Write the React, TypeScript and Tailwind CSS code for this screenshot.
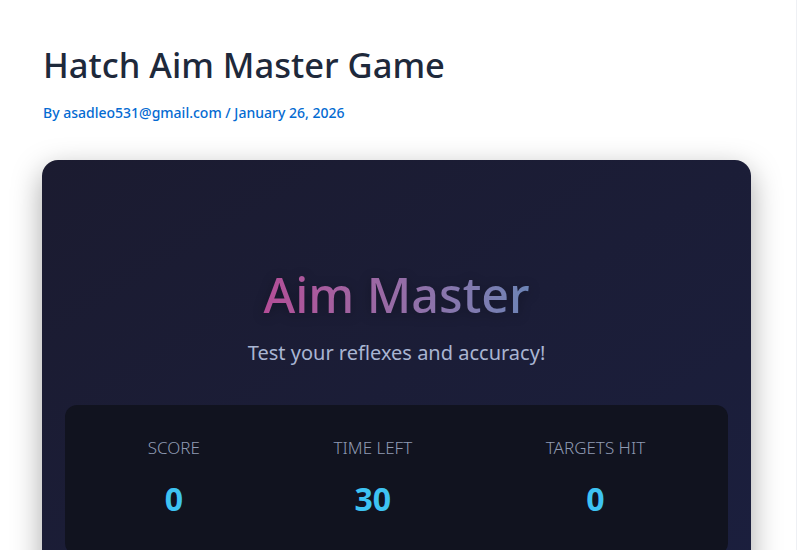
export default function App() {
  const stats = [
    { label: 'Score', value: '0' },
    { label: 'Time Left', value: '30' },
    { label: 'Targets Hit', value: '0' },
  ]

  return (
    <div
      className="h-[550px] overflow-hidden border-r border-[#eef0f4] bg-white"
      style={{ fontFamily: '"Noto Sans", "Open Sans", sans-serif' }}
    >
      {/* Post header */}
      <div className="pl-[43px] pt-[44px]">
        <h1 className="text-[34.5px] font-medium leading-[1.2] text-[#1e293b]">Hatch Aim Master Game</h1>
        <p className="mt-[18px] text-[14px] font-medium leading-[1.4] text-[#046bd2]">
          By asadleo531@gmail.com / January 26, 2026
        </p>
      </div>

      {/* Game card */}
      <div className="ml-[42px] mt-[37px] w-[709px] rounded-2xl bg-gradient-to-br from-[#1b1b30] to-[#1b1f3e] px-[23px] pt-[105px] pb-10 shadow-[0_10px_30px_rgba(0,0,0,0.35)]">
        <h2 className="mx-auto w-fit bg-gradient-to-r from-[#b44d97] to-[#6c84b6] bg-clip-text text-center text-[48.5px] font-medium leading-[1.2] text-transparent drop-shadow-[0_2px_6px_rgba(0,0,0,0.3)]">
          Aim Master
        </h2>
        <p className="mt-[16px] text-center text-[20px] leading-[1.4] text-[#a9b5d2]">
          Test your reflexes and accuracy!
        </p>

        <div className="mt-[38px] flex justify-around rounded-xl bg-[#11131f] px-4 pt-[31px] pb-10">
          {stats.map((s) => (
            <div key={s.label} className="flex flex-col items-center">
              <span className="text-[17px] font-light uppercase leading-[1.4] text-[#8f9ab3]">{s.label}</span>
              <span className="mt-[23px] text-[32px] font-bold leading-none text-[#3ec3f2]">{s.value}</span>
            </div>
          ))}
        </div>
      </div>
    </div>
  )
}
